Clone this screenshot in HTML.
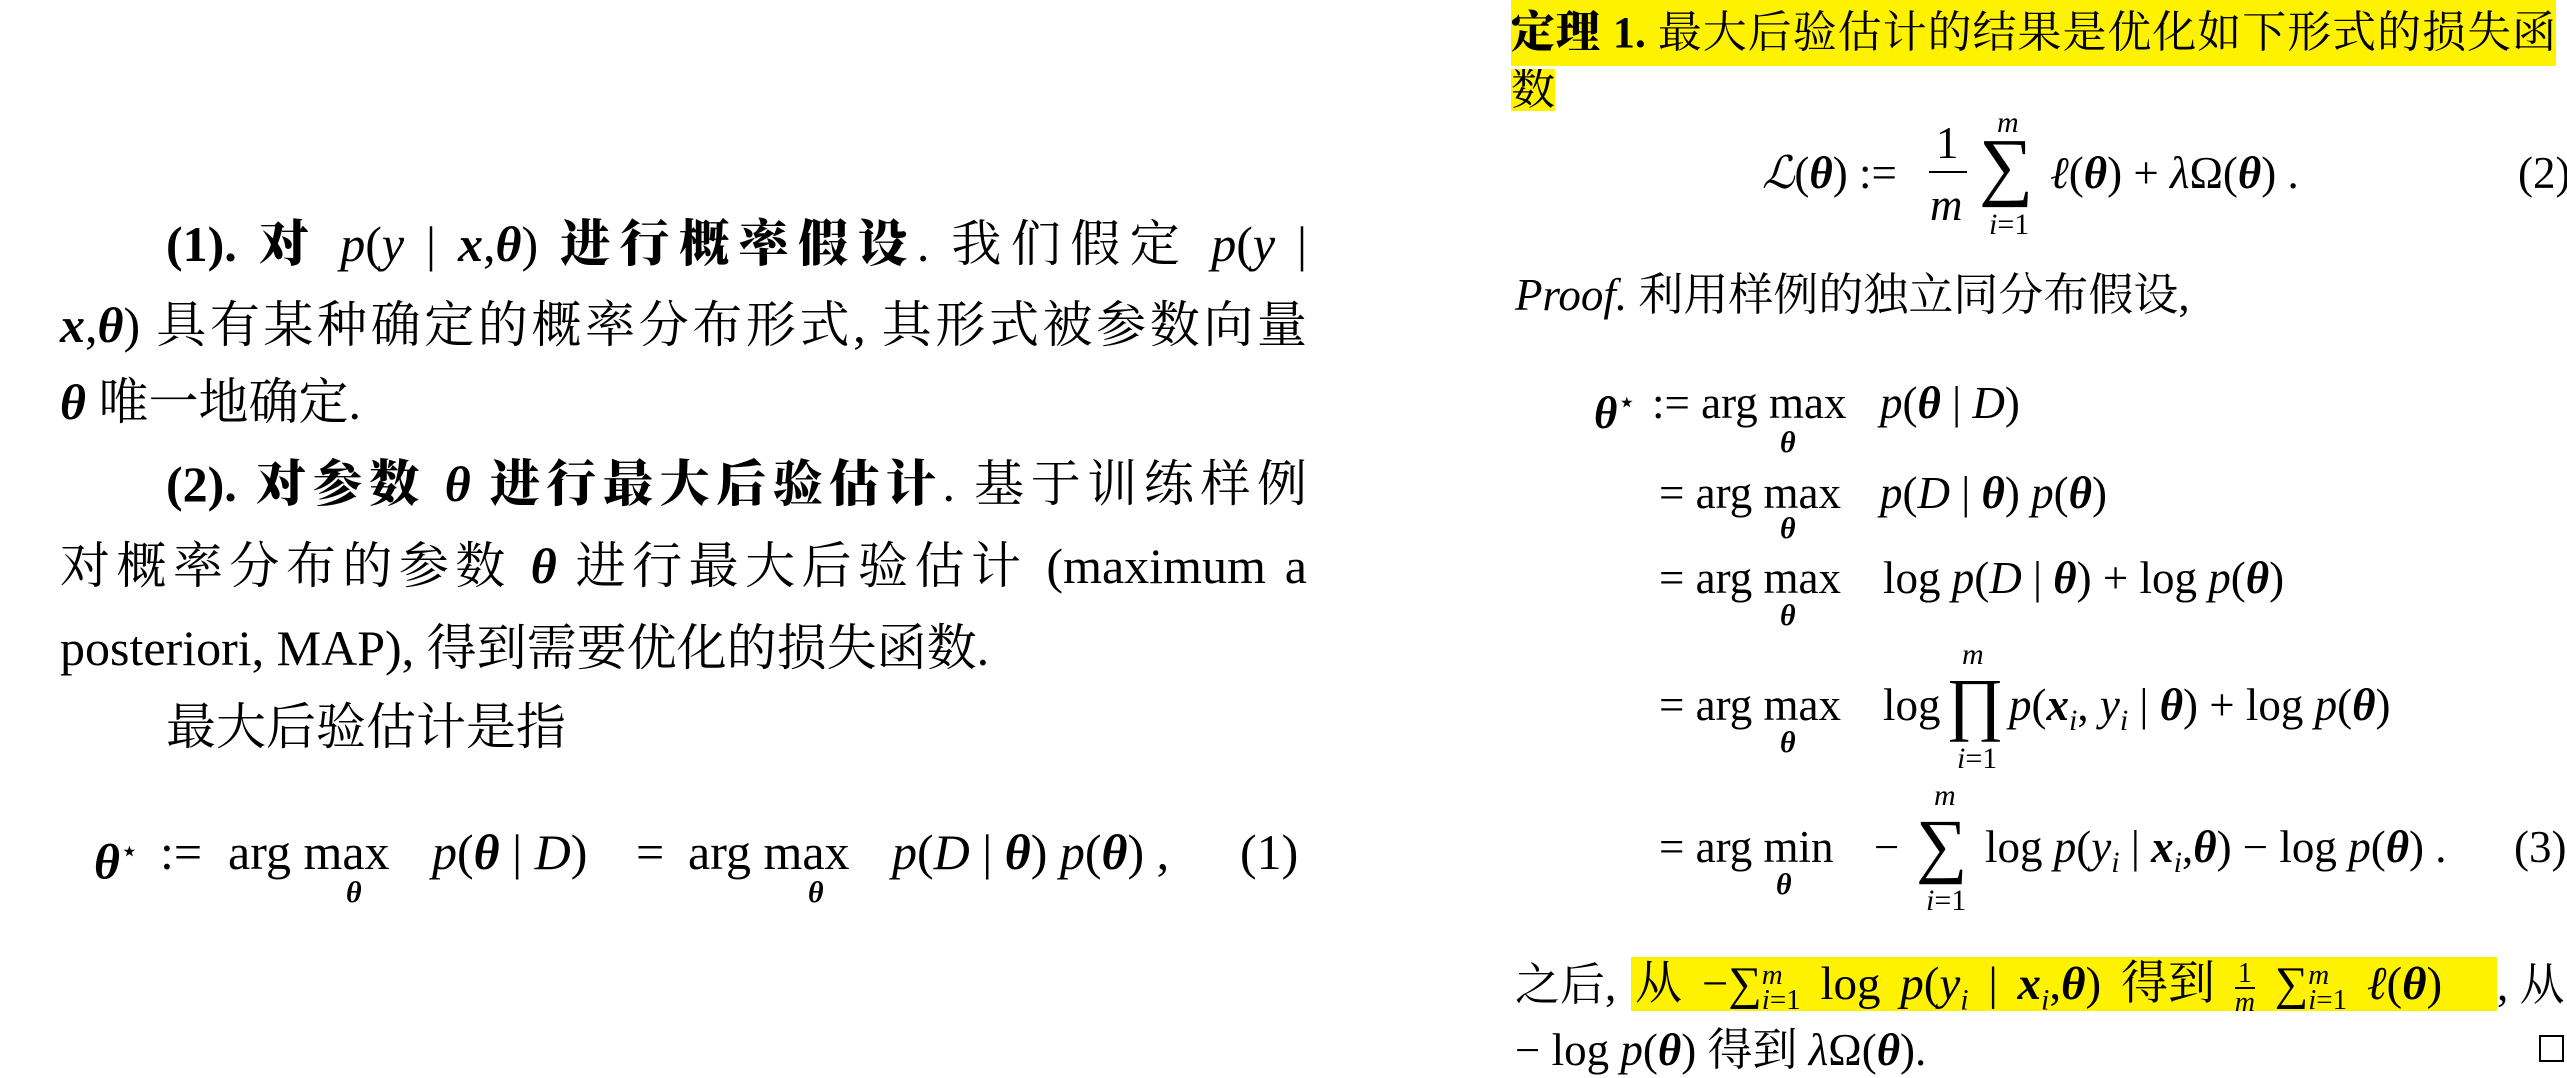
<!DOCTYPE html>
<html><head><meta charset="utf-8">
<style>
html,body{margin:0;padding:0;background:#fff;}
body{width:2567px;height:1078px;position:relative;overflow:hidden;color:#000;
font-family:"Liberation Serif","Noto Serif CJK SC",serif;}
.a{position:absolute;white-space:nowrap;}
.L{font-size:50px;line-height:60px;}
.R{font-size:45px;line-height:54px;}
.j{white-space:normal;text-align:justify;text-align-last:justify;}
i{font-style:italic;}
.bi{font-weight:bold;font-style:italic;}
b{font-weight:bold;}
.bc{font-family:"Liberation Serif","Noto Serif CJK SC",serif;font-weight:900;}
.hl{background:#fff200;}
.sm{font-size:30px;}
.fr{display:inline-block;vertical-align:middle;text-align:center;font-size:28px;line-height:27px;}
.fr span{display:block;}
.ss{display:inline-block;vertical-align:middle;font-size:29px;line-height:25px;}
.ss span{display:block;}
</style></head><body>

<!-- LEFT COLUMN -->
<div class="a L j" style="left:166px;top:214px;width:1141px;"><b>(1).</b> <span class="bc">对</span> <i>p</i>(<i>y</i> | <span class="bi">x</span>,<span class="bi">θ</span>) <span class="bc">进行概率假设</span>. 我们假定 <i>p</i>(<i>y</i> |</div>
<div class="a L j" style="left:60px;top:295px;width:1247px;"><span class="bi">x</span>,<span class="bi">θ</span>) 具有某种确定的概率分布形式, 其形式被参数向量</div>
<div class="a L" style="left:60px;top:372px;"><span class="bi">θ</span> 唯一地确定.</div>
<div class="a L j" style="left:166px;top:454px;width:1141px;"><b>(2).</b> <span class="bc">对参数</span> <span class="bi">θ</span> <span class="bc">进行最大后验估计</span>. 基于训练样例</div>
<div class="a L j" style="left:60px;top:536px;width:1247px;">对概率分布的参数 <span class="bi">θ</span> 进行最大后验估计 (maximum a</div>
<div class="a L" style="left:60px;top:618px;">posteriori, MAP), 得到需要优化的损失函数.</div>
<div class="a L" style="left:166px;top:697px;">最大后验估计是指</div>

<div class="a L" style="left:94px;top:822px;"><span class="bi">θ</span><sup class="sm">⋆</sup></div>
<div class="a L" style="left:160px;top:822px;">:=</div>
<div class="a L" style="left:228px;top:822px;">arg max</div>
<div class="a L" style="left:432px;top:822px;"><i>p</i>(<span class="bi">θ</span> | <i>D</i>)</div>
<div class="a L" style="left:636px;top:822px;">=</div>
<div class="a L" style="left:688px;top:822px;">arg max</div>
<div class="a L" style="left:892px;top:822px;"><i>p</i>(<i>D</i> | <span class="bi">θ</span>) <i>p</i>(<span class="bi">θ</span>) ,</div>
<div class="a L" style="left:1240px;top:822px;">(1)</div>
<div class="a bi sm" style="left:346px;top:876px;">θ</div>
<div class="a bi sm" style="left:808px;top:876px;">θ</div>

<!-- RIGHT COLUMN -->
<div class="a hl" style="left:1511px;top:0px;width:1045px;height:66px;font-size:44px;line-height:66px;text-align:justify;text-align-last:justify;white-space:nowrap;overflow:hidden;"><span class="bc">定理 1.</span> 最大后验估计的结果是优化如下形式的损失函</div>
<div class="a hl" style="left:1511px;top:69px;height:42px;line-height:42px;font-size:44px;overflow:hidden;">数</div>

<!-- Eq 2 -->
<div class="a R" style="left:1762px;top:146px;"><i>ℒ</i>(<span class="bi">θ</span>) :=</div>
<div class="a R" style="left:1936px;top:116px;">1</div>
<div class="a" style="left:1929px;top:171px;width:38px;height:2px;background:#000;"></div>
<div class="a R" style="left:1930px;top:178px;"><i>m</i></div>
<div class="a sm" style="left:1997px;top:106px;"><i>m</i></div>
<div class="a" style="left:1979px;top:118px;font-size:76px;line-height:96px;">∑</div>
<div class="a sm" style="left:1989px;top:208px;"><i>i</i>=1</div>
<div class="a R" style="left:2050px;top:146px;"><i>ℓ</i>(<span class="bi">θ</span>) + <i>λ</i>Ω(<span class="bi">θ</span>) .</div>
<div class="a R" style="left:2518px;top:146px;">(2)</div>

<div class="a R" style="left:1515px;top:268px;"><i>Proof.</i> 利用样例的独立同分布假设,</div>

<!-- aligned eq -->
<div class="a R" style="left:1594px;top:376px;"><span class="bi">θ</span><sup class="sm">⋆</sup></div>
<div class="a R" style="left:1652px;top:376px;">:= arg max</div>
<div class="a R" style="left:1880px;top:376px;"><i>p</i>(<span class="bi">θ</span> | <i>D</i>)</div>
<div class="a bi sm" style="left:1780px;top:426px;">θ</div>

<div class="a R" style="left:1659px;top:466px;">= arg max</div>
<div class="a R" style="left:1880px;top:466px;"><i>p</i>(<i>D</i> | <span class="bi">θ</span>) <i>p</i>(<span class="bi">θ</span>)</div>
<div class="a bi sm" style="left:1780px;top:512px;">θ</div>

<div class="a R" style="left:1659px;top:551px;">= arg max</div>
<div class="a R" style="left:1883px;top:551px;">log <i>p</i>(<i>D</i> | <span class="bi">θ</span>) + log <i>p</i>(<span class="bi">θ</span>)</div>
<div class="a bi sm" style="left:1780px;top:599px;">θ</div>

<div class="a R" style="left:1659px;top:678px;">= arg max</div>
<div class="a R" style="left:1883px;top:678px;">log</div>
<div class="a sm" style="left:1962px;top:638px;"><i>m</i></div>
<div class="a" style="left:1946px;top:662px;font-size:70px;line-height:86px;">∏</div>
<div class="a sm" style="left:1957px;top:742px;"><i>i</i>=1</div>
<div class="a R" style="left:2009px;top:678px;"><i>p</i>(<span class="bi">x</span><sub class="sm"><i>i</i></sub>, <i>y</i><sub class="sm"><i>i</i></sub> | <span class="bi">θ</span>) + log <i>p</i>(<span class="bi">θ</span>)</div>
<div class="a bi sm" style="left:1780px;top:726px;">θ</div>

<div class="a R" style="left:1659px;top:820px;">= arg min</div>
<div class="a R" style="left:1874px;top:820px;">−</div>
<div class="a sm" style="left:1934px;top:779px;"><i>m</i></div>
<div class="a" style="left:1916px;top:800px;font-size:72px;line-height:90px;">∑</div>
<div class="a sm" style="left:1926px;top:884px;"><i>i</i>=1</div>
<div class="a R" style="left:1985px;top:820px;">log <i>p</i>(<i>y</i><sub class="sm"><i>i</i></sub> | <span class="bi">x</span><sub class="sm"><i>i</i></sub>,<span class="bi">θ</span>) − log <i>p</i>(<span class="bi">θ</span>) .</div>
<div class="a R" style="left:2514px;top:820px;">(3)</div>
<div class="a bi sm" style="left:1776px;top:868px;">θ</div>

<!-- final lines -->
<div class="a R" style="left:1515px;top:958px;">之后,</div>
<div class="a hl" style="left:1631px;top:957px;width:866px;height:54px;"></div>
<div class="a" style="left:1635px;top:956px;font-size:47px;line-height:56px;word-spacing:8px;">从 −∑<span class="ss"><span><i>m</i></span><span><i>i</i>=1</span></span> log <i>p</i>(<i>y</i><sub class="sm"><i>i</i></sub> | <span class="bi">x</span><sub class="sm"><i>i</i></sub>,<span class="bi">θ</span>) 得到 <span class="fr"><span style="border-bottom:2px solid #000;">1</span><span><i>m</i></span></span> ∑<span class="ss"><span><i>m</i></span><span><i>i</i>=1</span></span> <i>ℓ</i>(<span class="bi">θ</span>)</div>
<div class="a R" style="left:2497px;top:958px;">, 从</div>
<div class="a R" style="left:1515px;top:1023px;">− log <i>p</i>(<span class="bi">θ</span>) 得到 <i>λ</i>Ω(<span class="bi">θ</span>).</div>
<div class="a" style="left:2539px;top:1035px;width:25px;height:27px;border:2px solid #000;box-sizing:border-box;"></div>

</body></html>
